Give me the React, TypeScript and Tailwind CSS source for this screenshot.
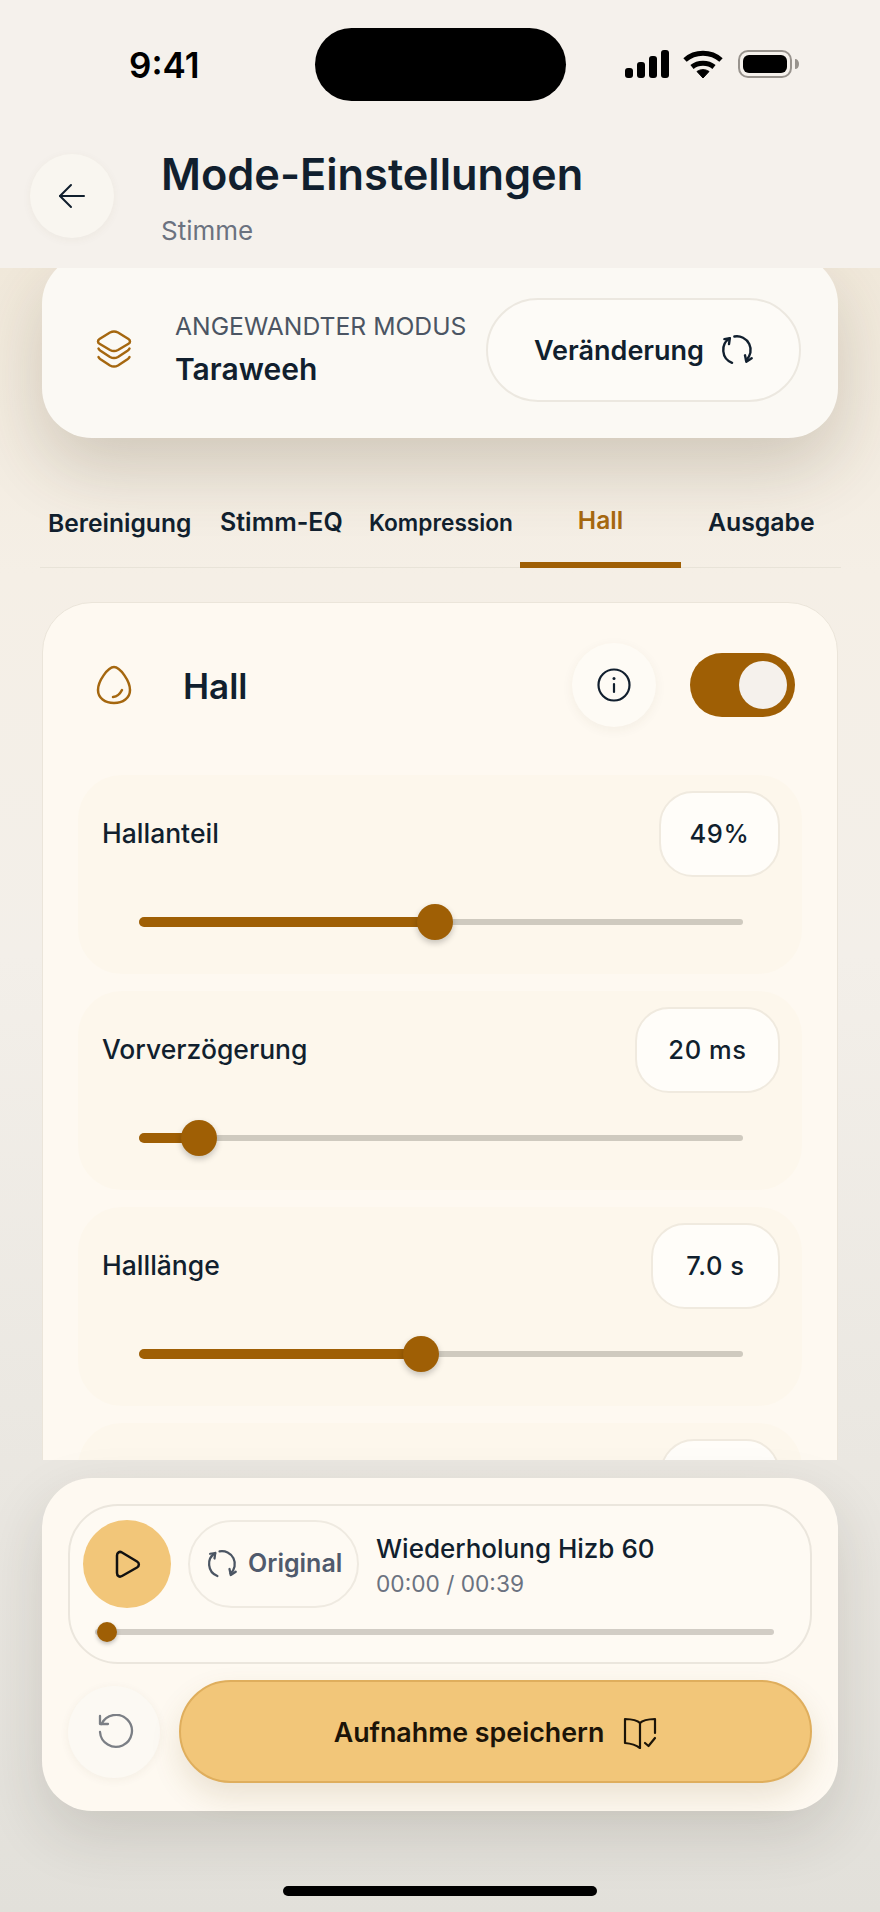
import React from "react";

const Refresh = ({ className }: { className?: string }) => (
  <svg viewBox="0 0 24 24" fill="none" stroke="currentColor" strokeWidth="1.800" strokeLinecap="round" strokeLinejoin="round" className={className}>
    <path d="M8.300 21.600A10.300 10.300 0 0 1 6.600 3.200" />
    <path d="M10 1.900A10.300 10.300 0 0 1 18.800 19.700" />
    <path d="M2.500 3.800 6.600 3.200 6 7.600" />
    <path d="M18 16l1 4.800 4-2.600" />
  </svg>
);

const Slider = ({ thumb }: { thumb: number }) => (
  <div className="relative mx-[37px] mt-[27px] h-[36px]">
    <div className="absolute left-0 right-0 top-[15px] h-[6px] rounded-full bg-[#cfcabf]" />
    <div className="absolute left-0 top-[13px] h-[10px] rounded-full bg-[#9f5f05]" style={{ width: thumb }} />
    <div className="absolute top-0 h-[36px] w-[36px] rounded-full bg-[#9f5f05] shadow-[0_3px_6px_rgba(0,0,0,0.22)]" style={{ left: thumb - 18 }} />
  </div>
);

const Row = ({ label, value, thumb, pill }: { label: string; value: string; thumb: number; pill: string }) => (
  <div className="h-[199px] shrink-0 rounded-[44px] bg-[#fdf7ec] pl-[24px] pr-[22px] pt-[16px]">
    <div className="flex h-[86px] items-center justify-between">
      <span className="text-[26.500px] font-medium text-[#111f2e]">{label}</span>
      <span className={"flex h-[86px] items-center justify-center rounded-[34px] border-2 border-[#f0eadf] bg-[#fffdf9] text-[25.500px] font-medium tracking-[0.6px] text-[#111f2e] " + pill}>{value}</span>
    </div>
    <Slider thumb={thumb} />
  </div>
);

const Tab = ({ children, className }: { children: string; className: string }) => (
  <span className={"whitespace-nowrap font-semibold " + className}>{children}</span>
);

export default function App() {
  return (
    <div className="flex h-[1912px] w-[880px] flex-col overflow-hidden bg-[linear-gradient(180deg,#f1e9db_14%,#f5efe6_30%,#f3efe9_50%,#e2e0da_100%)] font-['Inter',sans-serif] text-[#111f2e]">
      <header className="relative z-10 h-[268px] shrink-0 bg-[#f5f1ec]">
        <div className="flex h-[140px] items-start justify-between">
          <span className="ml-[129px] mt-[43px] text-[35px] font-semibold leading-[44px] text-black">9:41</span>
          <div className="absolute left-[315px] top-[28px] h-[73px] w-[251px] rounded-[37px] bg-black" />
          <div className="mr-[80px] mt-[50px] flex items-center">
            <svg viewBox="0 0 44 28" className="h-[28px] w-[44px]" fill="#000">
              <rect x="0" y="18" width="8" height="10" rx="3" />
              <rect x="12" y="12" width="8" height="16" rx="3" />
              <rect x="24" y="6" width="8" height="22" rx="3" />
              <rect x="36" y="0" width="8" height="28" rx="3" />
            </svg>
            <svg viewBox="0 0 40 28" className="ml-[14px] h-[28px] w-[40px]" fill="none" stroke="#000" strokeWidth="5">
              <path d="M2 10C12 1 28 1 38 10" />
              <path d="M9 17c6-5 16-5 22 0" />
              <path d="M14 21.500c3.500-2.500 8.500-2.500 12 0L20 28z" fill="#000" strokeWidth="1" />
            </svg>
            <svg viewBox="0 0 62 28" className="ml-[15px] h-[28px] w-[62px]">
              <rect x="1" y="1" width="52" height="26" rx="9" fill="none" stroke="#98938d" strokeWidth="2" />
              <rect x="5" y="5" width="44" height="18" rx="6" fill="#000" />
              <path d="M57 9c2.500 0 4 2 4 5s-1.500 5-4 5z" fill="#98938d" />
            </svg>
          </div>
        </div>
        <div className="flex">
          <button className="ml-[30px] mt-[14px] flex h-[84px] w-[84px] items-center justify-center rounded-full bg-[#f9f6f0] shadow-[0_2px_10px_rgba(90,70,40,0.05)]">
            <svg viewBox="0 0 28 28" className="h-[28px] w-[28px]" fill="none" stroke="#111f2e" strokeWidth="2" strokeLinecap="round" strokeLinejoin="round">
              <path d="M26 14H2" />
              <path d="M13 3 2 14l11 11" />
            </svg>
          </button>
          <div className="ml-[47px] mt-[7px]">
            <div className="text-[43.300px] font-semibold leading-[54px] text-[#111f2e]">Mode-Einstellungen</div>
            <div className="mt-[15px] text-[26px] leading-[30px] text-[#6b7280]">Stimme</div>
          </div>
        </div>
      </header>

      <main className="min-h-0 flex-1 overflow-hidden px-[42px]">
        <section className="-mt-[14px] flex h-[184px] items-center rounded-[50px] bg-[#fbf9f4] pl-[54px] pr-[37px] pt-[8px] shadow-[0_30px_70px_rgba(70,55,30,0.2)]">
          <svg viewBox="0 0 36 40" className="h-[40px] w-[36px]" fill="none" stroke="#a5670f" strokeWidth="2.500" strokeLinecap="round" strokeLinejoin="round">
            <path d="M14 2.500c2.500-1.300 5.500-1.300 8 0l10.500 6.500c2 1.300 2 3.500 0 4.700L22 20c-2.500 1.300-5.500 1.300-8 0L3.500 13.700c-2-1.200-2-3.400 0-4.700z" />
            <path d="M2.500 18.500c.5 1 1 1.500 2 2.200L14 27c2.500 1.300 5.500 1.300 8 0l9.500-6.300c1-.7 1.500-1.200 2-2.200" />
            <path d="M2.500 27c.5 1 1 1.500 2 2.200L14 35.500c2.500 1.300 5.500 1.300 8 0l9.500-6.300c1-.7 1.500-1.200 2-2.200" />
          </svg>
          <div className="ml-[43px] min-w-0 flex-1 pb-[3px]">
            <div className="whitespace-nowrap text-[24.700px] leading-[30px] text-[#4b5563]">ANGEWANDTER MODUS</div>
            <div className="mt-[10px] text-[30px] font-semibold leading-[36px]">Taraweeh</div>
          </div>
          <button className="flex h-[104px] w-[315px] shrink-0 items-center justify-center gap-[17px] rounded-full border-2 border-[#ece8e0] bg-[#fdfbf7]">
            <span className="pt-[2px] text-[27px] font-semibold">Veränderung</span>
            <Refresh className="h-[32px] w-[32px]" />
          </button>
        </section>

        <nav className="relative mt-[14px] h-[116px]">
          <div className="absolute -left-[2px] -right-[3px] bottom-0 h-[1px] bg-[#e8e3d8]" />
          <div className="flex h-full">
            <div className="flex w-[478px] shrink-0 items-center pl-[6px] pt-[26px]">
              <Tab className="w-[172px] text-[24.600px]">Bereinigung</Tab>
              <Tab className="w-[149px] text-[25px]">Stimm-EQ</Tab>
              <Tab className="text-[22.700px]">Kompression</Tab>
            </div>
            <div className="relative flex w-[161px] items-center justify-center border-b-[6px] border-[#9f5f05] pt-[26px] text-[#a5670f]">
              <Tab className="text-[24.600px]">Hall</Tab>
            </div>
            <div className="flex flex-1 items-center pl-[27px] pt-[26px]">
              <Tab className="text-[24.800px]">Ausgabe</Tab>
            </div>
          </div>
        </nav>

        <section className="mt-[34px] h-[1000px] rounded-[50px] border border-[#ebe5da] bg-[#fef9f1] px-[35px]">
          <div className="flex h-[172px] items-center pb-[8px]">
            <svg viewBox="0 0 36 40" className="ml-[18px] h-[40px] w-[36px]" fill="none" stroke="#a5670f" strokeWidth="2.500" strokeLinecap="round" strokeLinejoin="round">
              <path d="M18 2C24 2 34 16 34 25C34 33 27 38 18 38C9 38 2 33 2 25C2 16 12 2 18 2z" />
              <path d="M17 32C21 31.500 24 29 26 25" />
            </svg>
            <h2 className="ml-[51px] flex-1 pt-[2px] text-[35px] font-semibold leading-[44px]">Hall</h2>
            <button className="flex h-[84px] w-[84px] items-center justify-center rounded-full bg-[#fefbf5] shadow-[0_3px_12px_rgba(90,70,40,0.06)]">
              <svg viewBox="0 0 34 34" className="h-[34px] w-[34px]" fill="none" stroke="#111f2e" strokeWidth="2.200" strokeLinecap="round">
                <circle cx="17" cy="17" r="15.500" />
                <path d="M17 16v8" />
                <path d="M17 10.500v.1" strokeWidth="3" />
              </svg>
            </button>
            <div className="ml-[34px] mr-[7px] flex h-[64px] w-[105px] items-center justify-end rounded-full bg-[#9f5f05] pr-[8px]">
              <div className="h-[48px] w-[48px] rounded-full bg-[#f5f1ec]" />
            </div>
          </div>
          <div className="flex flex-col gap-[17px]">
            <Row label="Hallanteil" value="49%" thumb={296} pill="w-[121px]" />
            <Row label="Vorverzögerung" value="20 ms" thumb={60} pill="w-[145px]" />
            <Row label="Halllänge" value="7.0 s" thumb={282} pill="w-[129px]" />
            <Row label="" value="" thumb={0} pill="w-[120px]" />
          </div>
        </section>
      </main>

      <footer className="h-[452px] shrink-0 px-[42px] pt-[18px]">
        <section className="h-[333px] rounded-[50px] bg-[#fef9f1] px-[26px] pt-[26px] shadow-[0_24px_60px_rgba(50,45,30,0.14)]">
          <div className="h-[160px] rounded-[50px] border-2 border-[#ebe6dd] bg-[#fefaf3] px-[13px] pt-[14px]">
            <div className="flex items-center">
              <button className="flex h-[88px] w-[88px] items-center justify-center rounded-full bg-[#f2c679]">
                <svg viewBox="0 0 26 28" className="ml-[2px] h-[28px] w-[26px]" fill="none" stroke="#111" strokeWidth="2.500" strokeLinejoin="round">
                  <path d="M2 5.500c0-3 2.500-4.500 5-3l15 9c2.500 1.500 2.500 4.500 0 6l-15 8.500c-2.500 1.500-5 0-5-3z" />
                </svg>
              </button>
              <div className="ml-[17px] flex h-[88px] w-[171px] items-center gap-[11px] rounded-full border-2 border-[#efeae1] pl-[17px]">
                <Refresh className="h-[30px] w-[30px] shrink-0 text-[#4b5563]" />
                <span className="text-[25px] font-semibold text-[#505a6c]">Original</span>
              </div>
              <div className="ml-[17px] pt-[3px]">
                <div className="text-[26px] font-medium leading-[32px]">Wiederholung Hizb 60</div>
                <div className="mt-[5px] text-[22.700px] leading-[28px] text-[#6b7280]">00:00 / 00:39</div>
              </div>
            </div>
            <div className="relative mt-[14px] h-[20px]">
              <div className="absolute left-[12px] right-[23px] top-[7px] h-[6px] rounded-full bg-[#d2cdc5]" />
              <div className="absolute left-[14px] top-0 h-[20px] w-[20px] rounded-full bg-[#9f5f05] shadow-[0_2px_4px_rgba(0,0,0,0.25)]" />
            </div>
          </div>
          <div className="mt-[16px] flex items-center">
            <button className="flex h-[92px] w-[92px] shrink-0 items-center justify-center rounded-full bg-[#fcf9f3] pl-[4px] shadow-[0_2px_10px_rgba(90,70,40,0.06)]">
              <svg viewBox="0 0 36 36" className="h-[36px] w-[36px]" fill="none" stroke="#7b7f85" strokeWidth="2.300" strokeLinecap="round" strokeLinejoin="round">
                <path d="M3.500 10A16 16 0 1 1 2 18" />
                <path d="M2 2v8h8" />
              </svg>
            </button>
            <button className="ml-[19px] flex h-[103px] flex-1 items-center justify-center gap-[19px] rounded-full border-2 border-[#dfae5d] bg-[#f2c679] pt-[2px] shadow-[0_14px_30px_rgba(120,90,30,0.14)]">
              <span className="text-[26.800px] font-semibold text-[#1c1408]">Aufnahme speichern</span>
              <svg viewBox="0 0 34 32" className="h-[32px] w-[34px]" fill="none" stroke="#1c1408" strokeWidth="2.200" strokeLinecap="round" strokeLinejoin="round">
                <path d="M17 6v25C13 28 8 26.500 2 26V2c6 .2 12 1 15 4z" />
                <path d="M17 6C20 3 26 2.200 32 2v14" />
                <path d="M22 26l3.500 3L32 21" />
              </svg>
            </button>
          </div>
        </section>
        <div className="mx-auto mt-[75px] h-[10px] w-[314px] rounded-full bg-black" />
      </footer>
    </div>
  );
}
